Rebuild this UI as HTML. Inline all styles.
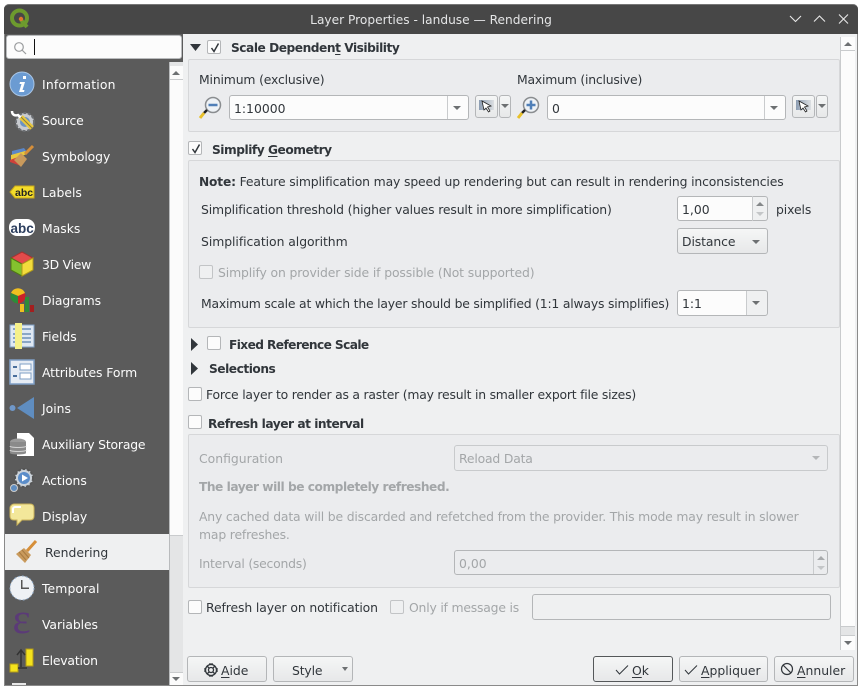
<!DOCTYPE html>
<html><head><meta charset="utf-8"><style>
html,body{margin:0;padding:0;background:#fff;width:862px;height:698px;overflow:hidden}
*{box-sizing:border-box}
body{font-family:"DejaVu Sans","Liberation Sans",sans-serif;font-size:12.4px;color:#31363b;position:relative}
.t{position:absolute;white-space:nowrap;line-height:16px;height:16px;margin-top:1px}
.b{font-weight:bold;font-size:12.2px;letter-spacing:-.47px}
.dis{color:#a3a6a8}
.abs{position:absolute}
.li{position:absolute;left:42px;color:#fcfcfc;white-space:nowrap;line-height:16px;margin-top:1px;letter-spacing:-.08px}
.ic{position:absolute;left:9px;width:26px;height:26px}
.cb{position:absolute;width:14px;height:14px;background:#fcfcfc;border:1px solid #b4b6b8;border-radius:2px}
.cb svg{position:absolute;left:1px;top:1px}
.cb.d{background:#eff0f1;border-color:#c2c4c6}
.gb{position:absolute;left:188px;width:652px;background:#ebecee;border:1px solid #d6d7d9;border-radius:2px}
.inp{position:absolute;background:#fcfcfc;border:1px solid #b4b6b8;border-radius:3px}
.btn{position:absolute;background:linear-gradient(#f5f6f6,#e7e8e9);border:1px solid #b4b6b8;border-radius:3px}
.arr{position:absolute;width:0;height:0;border-left:4px solid transparent;border-right:4px solid transparent;border-top:4px solid #6d7072}
.up{border-top:0;border-bottom:4px solid #6d7072}
u{text-underline-offset:2px}
</style></head><body>
<div class="abs" style="left:4px;top:4px;width:854px;height:682px;background:#eff0f1;border:1px solid #8a8a8a;border-radius:5px 5px 0 0"></div>
<div class="abs" style="left:4px;top:4px;width:854px;height:30px;background:#474747;border-radius:5px 5px 0 0;border-top:1px solid #777"></div>
<svg class="abs" style="left:9px;top:8px" width="22" height="22" viewBox="0 0 22 22"><circle cx="10.5" cy="10" r="7.5" fill="none" stroke="#6d9a2e" stroke-width="4"/><path d="M12 12l6 7" stroke="#6d9a2e" stroke-width="4"/><circle cx="12" cy="11" r="2.2" fill="#e0762d"/></svg>
<div class="t" style="left:0;width:862px;top:11px;text-align:center;color:#e4e5e6;font-size:12.2px">Layer Properties - landuse — Rendering</div>
<svg class="abs" style="left:786px;top:12px" width="66" height="16" viewBox="0 0 66 16" fill="none" stroke="#e8e8e8" stroke-width="1.1"><path d="M4 4l5.5 5.5L15 4M28 9.500l5.500-5.500 5.500 5.500M53 2.500l9 9M62 2.500l-9 9"/></svg>

<!-- left list -->
<div class="abs" style="left:5px;top:60px;width:164px;height:625px;background:#5b5b5b"></div>
<div class="abs" style="left:5px;top:34px;width:178px;height:28px;background:#5b5b5b"></div>
<div class="abs" style="left:6px;top:35px;width:176px;height:24px;background:#fcfcfc;border:1px solid #b9bbbd;border-radius:3px"></div>
<svg class="abs" style="left:13px;top:41px" width="14" height="14" viewBox="0 0 14 14" fill="none" stroke="#9a9c9e" stroke-width="1.2"><circle cx="6" cy="6" r="4.300"/><path d="M9 9l4 4"/></svg>
<div class="abs" style="left:34px;top:39px;width:1px;height:16px;background:#111"></div>

<div class="abs" style="left:169px;top:62px;width:14px;height:623px;background:#e4e5e6;border-left:1px solid #b9bbbd"></div>
<div class="abs" style="left:170px;top:66px;width:13px;height:470px;background:#fbfbfb;border-bottom:1px solid #c9cbcd"></div>
<div class="abs" style="left:170px;top:79px;width:13px;height:1px;background:#c9cbcd"></div>
<div class="abs" style="left:170px;top:672px;width:13px;height:13px;background:#fbfbfb;border-top:1px solid #c9cbcd"></div>
<div class="arr up" style="left:172px;top:71px"></div>
<div class="arr" style="left:172px;top:677px"></div>

<div class="abs" style="left:5px;top:534px;width:164px;height:36px;background:#eff0f1"></div>

<div class="li" style="top:76px;letter-spacing:.18px">Information</div>
<div class="li" style="top:112px;letter-spacing:-.15px">Source</div>
<div class="li" style="top:148px">Symbology</div>
<div class="li" style="top:184px;letter-spacing:0">Labels</div>
<div class="li" style="top:220px;letter-spacing:0">Masks</div>
<div class="li" style="top:256px;letter-spacing:-.25px">3D View</div>
<div class="li" style="top:292px">Diagrams</div>
<div class="li" style="top:328px">Fields</div>
<div class="li" style="top:364px">Attributes Form</div>
<div class="li" style="top:400px;letter-spacing:0">Joins</div>
<div class="li" style="top:436px;letter-spacing:-.18px">Auxiliary Storage</div>
<div class="li" style="top:472px">Actions</div>
<div class="li" style="top:508px">Display</div>
<div class="li" style="top:544px;left:45px;color:#31363b;letter-spacing:0">Rendering</div>
<div class="li" style="top:580px;letter-spacing:.1px">Temporal</div>
<div class="li" style="top:616px">Variables</div>
<div class="li" style="top:652px;letter-spacing:-.2px">Elevation</div>

<svg class="ic" style="top:71px" viewBox="0 0 26 26"><circle cx="13" cy="13" r="12" fill="#6b9bd2" stroke="#a9c6e6"/><path d="M14 5h3v3h-3zM11 11h5l-2.500 8h2l-.5 2h-5l2.500-8h-2z" fill="#fff"/></svg>
<svg class="ic" style="top:107px" viewBox="0 0 26 26"><circle cx="16" cy="15" r="9" fill="#c8cbd0" stroke="#6b6e72" stroke-dasharray="3 1.500" stroke-width="2"/><circle cx="16" cy="15" r="5" fill="#6b93c4"/><path d="M3 4c0 4 3 5 6 4l4 4" fill="none" stroke="#fff" stroke-width="2.500"/><path d="M12 10l11 11" stroke="#e8c83e" stroke-width="5"/><path d="M12 10l11 11" stroke="#333" stroke-width="1" opacity=".5"/></svg>
<svg class="ic" style="top:143px" viewBox="0 0 26 26"><path d="M3 8l12-3 3 4-15 6z" fill="#5a86c8"/><path d="M2 12l14-4 2 3-16 6z" fill="#e8c83e"/><path d="M1 17l8-3 5 7-2 2-11-4z" fill="#d0413a"/><path d="M16 11l8-8" stroke="#d68f3a" stroke-width="3"/><path d="M12 10l6 6-6 8-7-7z" fill="#c99a5c"/></svg>
<svg class="ic" style="top:179px" viewBox="0 0 26 26"><path d="M1 13l5-6h19v12H6z" fill="#f4dc2a" stroke="#c9a91a"/><text x="6" y="17" font-family="Liberation Sans" font-size="10.500" font-weight="bold" fill="#222">abc</text></svg>
<svg class="ic" style="top:215px" viewBox="0 0 26 26"><rect x="0" y="4" width="26" height="17" rx="8" fill="#fff"/><text x="1.500" y="18" font-family="Liberation Sans" font-size="13.500" font-weight="bold" fill="#2c3e5e">abc</text></svg>
<svg class="ic" style="top:251px" viewBox="0 0 26 26"><path d="M13 1l11 6-11 6L2 7z" fill="#e34b4b" stroke="#a83030"/><path d="M2 7l11 6v12L2 19z" fill="#84c22e" stroke="#4f7a14"/><path d="M24 7l-11 6v12l11-6z" fill="#f3dc3c" stroke="#b09a1a"/></svg>
<svg class="ic" style="top:287px" viewBox="0 0 26 26"><circle cx="9" cy="9" r="7.500" fill="#c9222a"/><path d="M9 9L2 6a7.500 7.500 0 0 1 14 0z" fill="#f0c020"/><path d="M9 9v7.500A7.500 7.500 0 0 1 2 6z" fill="#2e8b3a"/><rect x="11" y="17" width="4" height="8" fill="#f0c020"/><rect x="16" y="10" width="4" height="15" fill="#2e8b3a"/><rect x="21" y="18" width="4" height="7" fill="#a31f1f"/></svg>
<svg class="ic" style="top:323px" viewBox="0 0 26 26"><rect x="1" y="2" width="24" height="22" fill="#dfe8f3" stroke="#7f9fc6"/><path d="M4 6h18M4 11h18M4 15h18M4 19h18" stroke="#6f8fb8" stroke-width="1.500"/><rect x="6" y="0" width="7" height="26" fill="#f5f08a"/></svg>
<svg class="ic" style="top:359px" viewBox="0 0 26 26"><rect x="1" y="1" width="24" height="24" fill="#e6ecf4" stroke="#7f9fc6" stroke-width="1.500"/><path d="M4 8h4M4 17h4" stroke="#4a6f9c" stroke-width="2"/><rect x="11" y="5" width="11" height="6" fill="#fff" stroke="#7f9fc6"/><rect x="11" y="14" width="11" height="6" fill="#fff" stroke="#7f9fc6"/></svg>
<svg class="ic" style="top:395px" viewBox="0 0 26 26"><circle cx="3.500" cy="13" r="3" fill="#6f97c8"/><path d="M8 13L25 2v22z" fill="#5f8dc0"/></svg>
<svg class="ic" style="top:431px" viewBox="0 0 26 26"><path d="M8 2h12l5 5v18H8z" fill="#fff"/><ellipse cx="9" cy="11" rx="8" ry="3.500" fill="#9a9a9a"/><path d="M1 11v11c0 2 16 2 16 0V11z" fill="#8a8a8a"/><path d="M1 15c0 2 16 2 16 0M1 19c0 2 16 2 16 0" fill="none" stroke="#d0d0d0"/></svg>
<svg class="ic" style="top:467px" viewBox="0 0 26 26"><circle cx="15" cy="11" r="9" fill="#ccd3da" stroke="#555" stroke-width="2" stroke-dasharray="3 1.500"/><circle cx="15" cy="11" r="6" fill="#5b8dc9"/><path d="M13 7.500l6 3.500-6 3.500z" fill="#fff"/><circle cx="5" cy="21" r="3.500" fill="#5f8dc0" stroke="#ccc"/></svg>
<svg class="ic" style="top:503px" viewBox="0 0 26 26"><path d="M5 1h16c3 0 4 2 4 4v8c0 3-2 4-4 4H13l-5 5v-5H5c-3 0-4-2-4-4V5c0-2 2-4 4-4z" fill="#f3e79a" stroke="#c9b25a"/><path d="M4 10V6c0-1 1-2 2-2h6" stroke="#fff" stroke-width="2" fill="none"/></svg>
<svg class="ic" style="top:539px;left:13px" viewBox="0 0 26 26"><path d="M14 12l9-10" stroke="#d68f3a" stroke-width="3"/><path d="M11 9l7 7-6 8-9-9z" fill="#c99a5c"/><path d="M6 13l7 8M9 11l7 8" stroke="#a87a40"/></svg>
<svg class="ic" style="top:575px" viewBox="0 0 26 26"><circle cx="13" cy="13" r="12" fill="#eef1f5" stroke="#8fa8c4" stroke-dasharray="2 2"/><path d="M12 5v9h8v-1.500h-6.500V5z" fill="#555"/></svg>
<svg class="ic" style="top:611px" viewBox="0 0 26 26"><text x="3.500" y="22" font-family="Liberation Serif" font-size="43" fill="#5b3a78">ε</text></svg>
<svg class="ic" style="top:647px" viewBox="0 0 26 26"><rect x="17" y="2" width="7" height="17" fill="#f4e21c" stroke="#b09a1a"/><rect x="1" y="17" width="8" height="8" fill="#f4e21c" stroke="#b09a1a"/><path d="M12 20V4M8 8l4-5 4 5M9 21h9" stroke="#333" stroke-width="1.500" fill="none"/></svg>
<div class="abs" style="left:12px;top:683px;width:14px;height:2px;background:#e8e8e8"></div>

<!-- right scrollbar -->
<div class="abs" style="left:840px;top:37px;width:15px;height:613px;background:#fcfcfc;border-left:1px solid #c9cbcd"></div>
<div class="abs" style="left:841px;top:50px;width:14px;height:1px;background:#c9cbcd"></div>
<div class="abs" style="left:841px;top:626px;width:14px;height:10px;background:#e4e5e6;border-top:1px solid #c9cbcd;border-bottom:1px solid #c9cbcd"></div>
<div class="arr up" style="left:844px;top:42px"></div>
<div class="arr" style="left:844px;top:641px"></div>

<!-- Scale dependent -->
<svg class="abs" style="left:190px;top:44px" width="12" height="8"><path d="M0 0h11L5.500 7z" fill="#31363b"/></svg>
<div class="cb" style="left:207px;top:40px"><svg width="12" height="12" fill="none" stroke="#31363b" stroke-width="1.500"><path d="M2.500 6l2.500 3.500L9.500 1.500"/></svg></div>
<div class="t b" style="left:231px;top:39px">Scale Dependen<u>t</u> Visibility</div>
<div class="gb" style="top:59px;height:73px"></div>
<div class="t" style="left:199px;top:71px;letter-spacing:-.16px">Minimum (exclusive)</div>
<div class="t" style="left:517px;top:71px;letter-spacing:-.2px">Maximum (inclusive)</div>
<svg class="abs" style="left:198px;top:95px" width="26" height="26" viewBox="0 0 26 26"><circle cx="15" cy="10" r="7.500" fill="#eef2f6" stroke="#8a8d90" stroke-width="1.500"/><path d="M10.500 10h9" stroke="#4f7fb8" stroke-width="2.500"/><path d="M9 15l-3 3" stroke="#222" stroke-width="2.500"/><path d="M6 18l-4 5" stroke="#e8c02a" stroke-width="3"/></svg>
<div class="inp" style="left:229px;top:95px;width:240px;height:25px"><div class="abs" style="right:20px;top:0;width:1px;height:23px;background:#c9cbcd"></div></div>
<div class="t" style="left:234px;top:100px">1:10000</div>
<div class="arr" style="left:453px;top:106px"></div>
<div class="btn" style="left:475px;top:95px;width:23px;height:23px"></div>
<svg class="abs" style="left:478px;top:98px" width="18" height="17" viewBox="0 0 18 17"><defs><linearGradient id="g1"><stop offset="0" stop-color="#8c9db3"/><stop offset="1" stop-color="#dcdfe2"/></linearGradient></defs><rect x="1" y="2" width="15" height="10" fill="url(#g1)"/><path d="M4 3l9 5-3.500 1 2.500 4-1.500 1-2.500-4L6 12z" fill="#fff" stroke="#222" stroke-width=".8"/></svg>
<div class="btn" style="left:499px;top:95px;width:12px;height:23px"></div>
<div class="arr" style="left:501px;top:104px"></div>
<svg class="abs" style="left:516px;top:95px" width="26" height="26" viewBox="0 0 26 26"><circle cx="15" cy="10" r="7.500" fill="#eef2f6" stroke="#8a8d90" stroke-width="1.500"/><path d="M10.500 10h9M15 5.500v9" stroke="#4f7fb8" stroke-width="2.500"/><path d="M9 15l-3 3" stroke="#222" stroke-width="2.500"/><path d="M6 18l-4 5" stroke="#e8c02a" stroke-width="3"/></svg>
<div class="inp" style="left:547px;top:95px;width:239px;height:25px"><div class="abs" style="right:20px;top:0;width:1px;height:23px;background:#c9cbcd"></div></div>
<div class="t" style="left:552px;top:100px">0</div>
<div class="arr" style="left:770px;top:106px"></div>
<div class="btn" style="left:792px;top:95px;width:23px;height:23px"></div>
<svg class="abs" style="left:795px;top:98px" width="18" height="17" viewBox="0 0 18 17"><rect x="1" y="2" width="15" height="10" fill="url(#g1)"/><path d="M4 3l9 5-3.500 1 2.500 4-1.500 1-2.500-4L6 12z" fill="#fff" stroke="#222" stroke-width=".8"/></svg>
<div class="btn" style="left:816px;top:95px;width:12px;height:23px"></div>
<div class="arr" style="left:818px;top:104px"></div>

<!-- Simplify -->
<div class="cb" style="left:188px;top:141px"><svg width="12" height="12" fill="none" stroke="#31363b" stroke-width="1.500"><path d="M2.500 6l2.500 3.500L9.500 1.500"/></svg></div>
<div class="t b" style="left:212px;top:141px">Simplify <u>G</u>eometry</div>
<div class="gb" style="top:160px;height:168px"></div>
<div class="t" style="left:199px;top:173px;letter-spacing:-.145px"><b style="font-size:12.2px">Note:</b> Feature simplification may speed up rendering but can result in rendering inconsistencies</div>
<div class="t" style="left:201px;top:201px;letter-spacing:-.145px">Simplification threshold (higher values result in more simplification)</div>
<div class="abs" style="left:677px;top:196px;width:76px;height:25px;background:#fcfcfc;border:1px solid #b4b6b8;border-radius:3px 0 0 3px"></div>
<div class="abs" style="left:752px;top:196px;width:1px;height:25px;background:#c9cbcd"></div>
<div class="abs" style="left:753px;top:196px;width:15px;height:25px;background:#eff0f1;border:1px solid #b4b6b8;border-left:0;border-radius:0 3px 3px 0"></div>
<div class="arr up" style="left:756px;top:202px;border-bottom-color:#85888a"></div>
<div class="arr" style="left:756px;top:212px;border-top-color:#c4c6c8"></div>
<div class="t" style="left:682px;top:201px">1,00</div>
<div class="t" style="left:776px;top:201px;letter-spacing:-.1px">pixels</div>
<div class="t" style="left:201px;top:233px;letter-spacing:-.05px">Simplification algorithm</div>
<div class="btn" style="left:677px;top:228px;width:91px;height:26px"></div>
<div class="t" style="left:682px;top:233px;letter-spacing:-.1px">Distance</div>
<div class="arr" style="left:752px;top:240px"></div>
<div class="cb d" style="left:199px;top:265px"></div>
<div class="t dis" style="left:218px;top:264px;letter-spacing:-.115px">Simplify on provider side if possible (Not supported)</div>
<div class="t" style="left:201px;top:295px;letter-spacing:-.2px">Maximum scale at which the layer should be simplified (1:1 always simplifies)</div>
<div class="inp" style="left:677px;top:290px;width:91px;height:26px;background:linear-gradient(90deg,#fcfcfc 69px,#eff0f1 69px)"><div class="abs" style="right:20px;top:0;width:1px;height:24px;background:#c9cbcd"></div></div>
<div class="t" style="left:682px;top:295px">1:1</div>
<div class="arr" style="left:752px;top:301px"></div>

<!-- collapsed -->
<svg class="abs" style="left:191px;top:338px" width="8" height="13"><path d="M0 0l7 6.500L0 13z" fill="#31363b"/></svg>
<div class="cb" style="left:207px;top:336px"></div>
<div class="t b" style="left:229px;top:336px;letter-spacing:-.6px">Fixed Reference Scale</div>
<svg class="abs" style="left:191px;top:362px" width="8" height="13"><path d="M0 0l7 6.500L0 13z" fill="#31363b"/></svg>
<div class="t b" style="left:209px;top:360px">Selections</div>
<div class="cb" style="left:188px;top:387px"></div>
<div class="t" style="left:206px;top:386px;letter-spacing:-.21px">Force layer to render as a raster (may result in smaller export file sizes)</div>
<div class="cb" style="left:188px;top:415px"></div>
<div class="t b" style="left:208px;top:415px">Refresh layer at interval</div>

<!-- refresh -->
<div class="gb" style="top:434px;height:154px"></div>
<div class="t dis" style="left:199px;top:450px">Configuration</div>
<div class="abs" style="left:454px;top:445px;width:374px;height:26px;background:#ebecee;border:1px solid #c8cacc;border-radius:3px"></div>
<div class="t dis" style="left:459px;top:450px;letter-spacing:-.18px">Reload Data</div>
<div class="arr" style="left:812px;top:456px;border-top-color:#b4b6b8"></div>
<div class="t b dis" style="left:199px;top:478px">The layer will be completely refreshed.</div>
<div class="t dis" style="left:199px;top:508px;letter-spacing:-.17px">Any cached data will be discarded and refetched from the provider. This mode may result in slower</div>
<div class="t dis" style="left:199px;top:526px;letter-spacing:-.17px">map refreshes.</div>
<div class="t dis" style="left:199px;top:555px;letter-spacing:-.23px">Interval (seconds)</div>
<div class="abs" style="left:454px;top:550px;width:374px;height:25px;background:#ebecee;border:1px solid #b4b6b8;border-radius:3px"></div>
<div class="abs" style="left:813px;top:551px;width:1px;height:23px;background:#c9cbcd"></div>
<div class="arr up" style="left:817px;top:556px;border-bottom-color:#a8aaac"></div>
<div class="arr" style="left:817px;top:566px;border-top-color:#c4c6c8"></div>
<div class="t dis" style="left:459px;top:555px">0,00</div>

<div class="cb" style="left:188px;top:600px"></div>
<div class="t" style="left:206px;top:599px;letter-spacing:-.1px">Refresh layer on notification</div>
<div class="cb d" style="left:390px;top:600px"></div>
<div class="t dis" style="left:409px;top:599px;letter-spacing:-.2px">Only if message is</div>
<div class="abs" style="left:532px;top:594px;width:299px;height:26px;background:#eff0f1;border:1px solid #b4b6b8;border-radius:3px"></div>

<!-- bottom buttons -->
<div class="btn" style="left:187px;top:656px;width:80px;height:26px"></div>
<svg class="abs" style="left:204px;top:663px" width="14" height="14" viewBox="0 0 14 14" fill="none" stroke="#31363b" stroke-width="1.300"><circle cx="7" cy="7" r="5.500"/><circle cx="7" cy="7" r="2.500"/><path d="M3 3l2 2M11 3L9 5M3 11l2-2M11 11L9 9M1 5v4M13 5v4M5 1h4M5 13h4"/></svg>
<div class="t" style="left:221px;top:662px"><u>A</u>ide</div>
<div class="btn" style="left:273px;top:656px;width:80px;height:26px"></div>
<div class="t" style="left:292px;top:662px;letter-spacing:-.15px">Style</div>
<div class="arr" style="left:342px;top:667px;border-left-width:3.500px;border-right-width:3.500px"></div>
<div class="btn" style="left:593px;top:656px;width:80px;height:26px;border-color:#55585a"></div>
<svg class="abs" style="left:615px;top:664px" width="14" height="12" fill="none" stroke="#31363b"><path d="M1 6l3.500 4L13 1.500"/></svg>
<div class="t" style="left:632px;top:662px"><u>O</u>k</div>
<div class="btn" style="left:679px;top:656px;width:89px;height:26px"></div>
<svg class="abs" style="left:684px;top:664px" width="14" height="12" fill="none" stroke="#31363b"><path d="M1 6l3.500 4L13 1.500"/></svg>
<div class="t" style="left:701px;top:662px"><u>A</u>ppliquer</div>
<div class="btn" style="left:774px;top:656px;width:80px;height:26px"></div>
<svg class="abs" style="left:780px;top:662px" width="14" height="14" fill="none" stroke="#31363b" stroke-width="1.200"><circle cx="7" cy="7" r="5.500"/><path d="M3 3l8 8"/></svg>
<div class="t" style="left:797px;top:662px"><u>A</u>nnuler</div>
</body></html>
